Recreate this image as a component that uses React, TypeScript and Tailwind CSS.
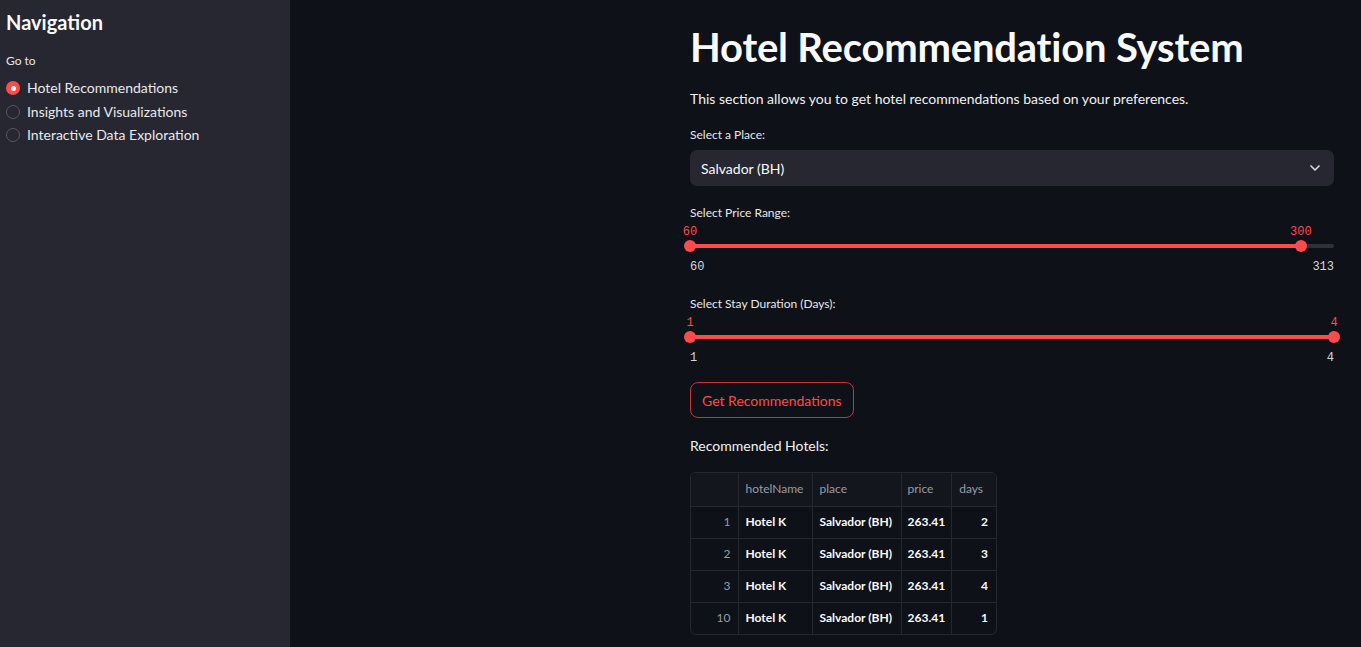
import { ChevronDown } from 'lucide-react'

const font = { fontFamily: 'Lato, "Noto Sans", sans-serif' }

const navItems = ['Hotel Recommendations', 'Insights and Visualizations', 'Interactive Data Exploration']

const rows = [
  { idx: 1, hotelName: 'Hotel K', place: 'Salvador (BH)', price: '263.41', days: 2 },
  { idx: 2, hotelName: 'Hotel K', place: 'Salvador (BH)', price: '263.41', days: 3 },
  { idx: 3, hotelName: 'Hotel K', place: 'Salvador (BH)', price: '263.41', days: 4 },
  { idx: 10, hotelName: 'Hotel K', place: 'Salvador (BH)', price: '263.41', days: 1 },
]

const RangeSlider = ({
  lo,
  hi,
  min,
  max,
}: {
  lo: number
  hi: number
  min: number
  max: number
}) => {
  const a = ((lo - min) / (max - min)) * 100
  const b = ((hi - min) / (max - min)) * 100
  return (
    <div className="font-['Liberation_Mono',monospace] text-[12px]">
      <div className="relative h-[16px]">
        <span className="absolute top-0 -translate-x-1/2 text-[#ff4b4b]" style={{ left: `${a}%` }}>
          {lo}
        </span>
        <span className="absolute top-0 -translate-x-1/2 text-[#ff4b4b]" style={{ left: `${b}%` }}>
          {hi}
        </span>
      </div>
      <div className="relative h-[14px] flex items-center">
        <div className="h-[4px] w-full rounded bg-[#2f3139]" />
        <div
          className="absolute h-[4px] rounded bg-[#ff4b4b]"
          style={{ left: `${a}%`, width: `${b - a}%` }}
        />
        <div
          className="absolute w-[12px] h-[12px] -ml-[6px] rounded-full bg-[#ff4b4b]"
          style={{ left: `${a}%` }}
        />
        <div
          className="absolute w-[12px] h-[12px] -ml-[6px] rounded-full bg-[#ff4b4b]"
          style={{ left: `${b}%` }}
        />
      </div>
      <div className="flex justify-between text-[#d5d7de] mt-[5px]">
        <span>{min}</span>
        <span>{max}</span>
      </div>
    </div>
  )
}

const App = () => {
  return (
    <div className="flex w-[1361px] h-[647px] overflow-hidden bg-[#0e1117] text-[#fafafa]" style={font}>
      {/* Sidebar */}
      <aside className="w-[290px] shrink-0 bg-[#262730] px-[6px] pt-[8px]">
        <h2 className="text-[20px] font-bold leading-[28px]">Navigation</h2>
        <p className="mt-[16px] text-[12px] text-[#e6e7ea]">Go to</p>
        <div className="mt-[9px] flex flex-col gap-[5.5px]">
          {navItems.map((item, i) => (
            <label key={item} className="flex items-center gap-[7px] text-[14px] leading-[18px]">
              {i === 0 ? (
                <span className="w-[14px] h-[14px] rounded-full bg-[#ff4b4b] flex items-center justify-center">
                  <span className="w-[5px] h-[5px] rounded-full bg-white" />
                </span>
              ) : (
                <span className="w-[14px] h-[14px] rounded-full border border-[#555865]" />
              )}
              <span className="text-[#e8e9ec]">{item}</span>
            </label>
          ))}
        </div>
      </aside>

      {/* Main */}
      <main className="flex-1 pl-[400px] pt-[24px]">
        <div className="w-[644px]">
          <h1 className="text-[40px] font-bold leading-[46px] tracking-[-0.2px]">Hotel Recommendation System</h1>
          <p className="mt-[18px] text-[14px] text-[#f0f1f3]">
            This section allows you to get hotel recommendations based on your preferences.
          </p>

          <p className="mt-[17px] text-[12px] text-[#e6e7ea]">Select a Place:</p>
          <div className="mt-[6px] h-[36px] rounded-[7px] bg-[#262730] flex items-center justify-between px-[11px] text-[14px]">
            <span>Salvador (BH)</span>
            <ChevronDown size={16} strokeWidth={2.5} className="text-[#d8d9dd]" />
          </div>

          <p className="mt-[18px] text-[12px] text-[#e6e7ea]">Select Price Range:</p>
          <div className="mt-[1px]">
            <RangeSlider lo={60} hi={300} min={60} max={313} />
          </div>

          <p className="mt-[19px] text-[12px] text-[#e6e7ea]">Select Stay Duration (Days):</p>
          <div className="mt-[1px]">
            <RangeSlider lo={1} hi={4} min={1} max={4} />
          </div>

          <button className="mt-[15px] h-[36px] px-[11px] rounded-[8px] border border-[#c9343a] text-[#ff4b4b] text-[14px]">
            Get Recommendations
          </button>

          <p className="mt-[17px] text-[14px] text-[#f0f1f3]">Recommended Hotels:</p>

          <div className="mt-[16px] w-[307px] rounded-[6px] border border-[#262830] overflow-hidden text-[12px]">
            <table className="w-full border-collapse">
              <thead>
                <tr className="h-[33px] bg-[#14161d] text-[#9a9ca5]">
                  <th className="w-[47px] border-r border-b border-[#262830]" />
                  <th className="w-[74px] text-left font-normal px-[7px] border-r border-b border-[#262830]">hotelName</th>
                  <th className="w-[89px] text-left font-normal px-[7px] border-r border-b border-[#262830]">place</th>
                  <th className="w-[50px] text-left font-normal px-[6px] border-r border-b border-[#262830]">price</th>
                  <th className="text-left font-normal px-[7px] border-b border-[#262830]">days</th>
                </tr>
              </thead>
              <tbody>
                {rows.map((r, i) => (
                  <tr key={r.idx} className="h-[32px]">
                    <td className={`text-right pr-[7px] text-[#9a9ca5] border-r border-[#262830] ${i < 3 ? 'border-b' : ''}`}>{r.idx}</td>
                    <td className={`px-[7px] font-bold border-r border-[#262830] ${i < 3 ? 'border-b' : ''}`}>{r.hotelName}</td>
                    <td className={`px-[7px] font-bold border-r border-[#262830] ${i < 3 ? 'border-b' : ''}`}>{r.place}</td>
                    <td className={`px-[6px] font-bold border-r border-[#262830] ${i < 3 ? 'border-b' : ''}`}>{r.price}</td>
                    <td className={`text-right pr-[8px] font-bold border-[#262830] ${i < 3 ? 'border-b' : ''}`}>{r.days}</td>
                  </tr>
                ))}
              </tbody>
            </table>
          </div>
        </div>
      </main>
    </div>
  )
}

export default App
